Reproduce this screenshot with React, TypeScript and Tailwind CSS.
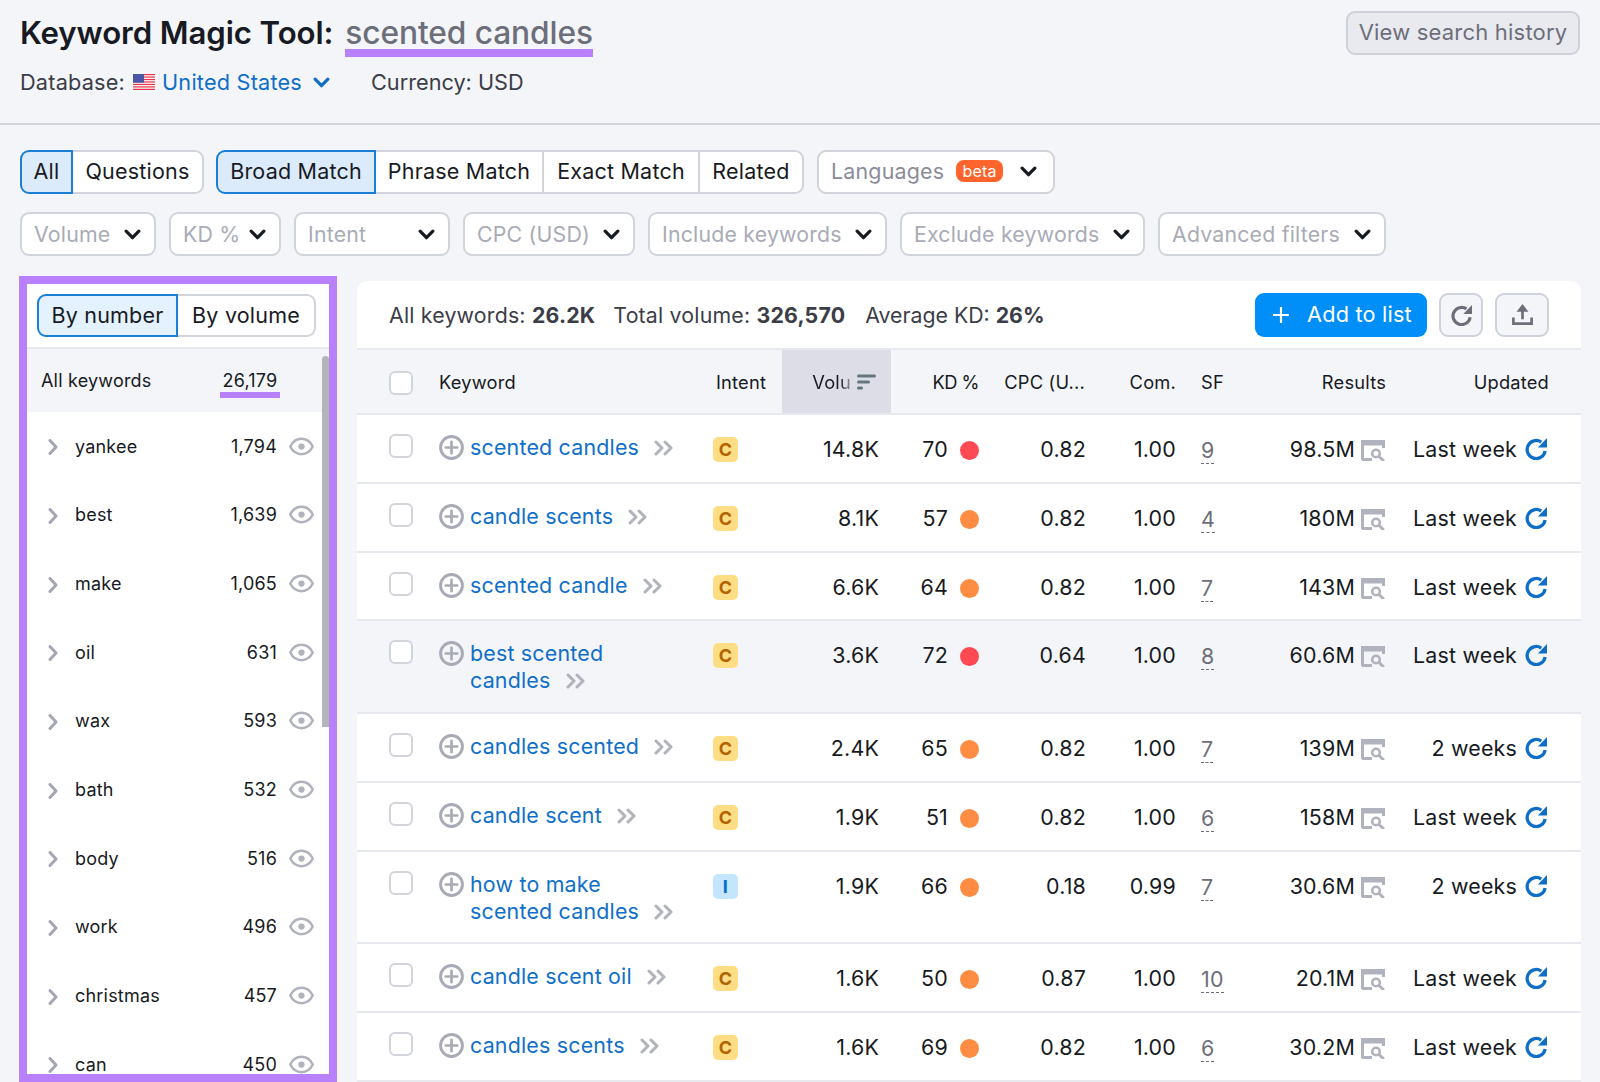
import React from "react";

const F = "font-['Inter',sans-serif]";

function Chevron({ className = "" }: { className?: string }) {
  return (
    <svg viewBox="0 0 16 10" className={className} fill="none" stroke="currentColor" strokeWidth="3" strokeLinecap="round" strokeLinejoin="round">
      <path d="M2 1.800 8 8 14 1.800" />
    </svg>
  );
}
function RightChevron() {
  return (
    <svg viewBox="0 0 10 16" className="w-[10px] h-4 text-[#a4a6b3]" fill="none" stroke="currentColor" strokeWidth="3" strokeLinecap="round" strokeLinejoin="round">
      <path d="M2 1.500 8 8l-6 6.500" />
    </svg>
  );
}
function Eye() {
  return (
    <svg viewBox="0 0 24 18" className="w-[25px] h-[19px] text-[#b0b2bc]" fill="none" stroke="currentColor" strokeWidth="2.400">
      <path d="M1.200 9C3.600 4.200 7.400 1.600 12 1.600S20.400 4.200 22.800 9c-2.400 4.800-6.200 7.400-10.800 7.400S3.600 13.800 1.200 9Z" />
      <circle cx="12" cy="9" r="3" fill="currentColor" stroke="none" />
    </svg>
  );
}
function PlusCircle() {
  return (
    <svg viewBox="0 0 24 24" className="w-[25px] h-[25px] shrink-0 mt-[1px] text-[#a8aab6]" fill="none" stroke="currentColor">
      <circle cx="12" cy="12" r="10.500" strokeWidth="2.800" />
      <path d="M12 6.500v11M6.500 12h11" strokeWidth="2.600" strokeLinecap="round" />
    </svg>
  );
}
function DoubleChevron() {
  return (
    <svg viewBox="0 0 20 16" className="inline-block w-5 h-4 ml-[15px] align-[-1px] text-[#b0b2bc]" fill="none" stroke="currentColor" strokeWidth="3" strokeLinecap="round" strokeLinejoin="round">
      <path d="M2 2l6 6-6 6M11 2l6 6-6 6" />
    </svg>
  );
}
function Refresh({ className = "" }: { className?: string }) {
  return (
    <svg viewBox="0 0 24 24" className={className} fill="none">
      <path d="M22 14.500A9.400 9.400 0 1 1 18 5.300" stroke="currentColor" strokeWidth="3.400" strokeLinecap="butt" />
      <path d="M24 1V11H14.500Z" fill="currentColor" />
    </svg>
  );
}
function Serp() {
  return (
    <svg viewBox="0 0 24 21" className="w-6 h-[21px] shrink-0 text-[#b0b2bd]" fill="none" stroke="currentColor">
      <path d="M1.500 20V2h21v6" strokeWidth="3" fill="none" />
      <path d="M0 0h24v5.500H0z" fill="currentColor" stroke="none" />
      <path d="M1 19.500h10" strokeWidth="3" />
      <circle cx="15" cy="13.500" r="3.800" strokeWidth="2.600" />
      <path d="M18 16.500l4 3.800" strokeWidth="3" strokeLinecap="round" />
    </svg>
  );
}
function Flag() {
  return (
    <svg viewBox="0 0 22 16" className="w-[22px] h-4 shrink-0">
      <rect width="22" height="16" fill="#fff" />
      {[0, 2.46, 4.92, 7.38, 9.84, 12.3, 14.76].map((y) => (
        <rect key={y} y={y} width="22" height="1.24" fill="#e8374a" />
      ))}
      <rect width="11" height="8.600" fill="#4a55a8" />
    </svg>
  );
}
function Upload() {
  return (
    <svg viewBox="0 0 24 24" className="w-[23px] h-[23px] text-[#6c6e79]" fill="none" stroke="currentColor" strokeWidth="2.800">
      <path d="M2.500 15v6.500h19V15" />
      <path d="M12 17V3" />
      <path d="M12 1 5.800 9h12.400Z" fill="currentColor" stroke="none" />
    </svg>
  );
}
function SortIcon() {
  return (
    <svg viewBox="0 0 19 16" className="w-[19px] h-4 text-[#66767f]" fill="currentColor">
      <rect width="19" height="3" y="0.500" rx="1.500" />
      <rect width="13" height="3" y="6.500" rx="1.500" />
      <rect width="6" height="3" y="12.500" rx="1.500" />
    </svg>
  );
}

function Dropdown({ label, w }: { label: string; w: string }) {
  return (
    <div className={`${w} h-[44px] flex items-center justify-between pl-[12px] pr-[13px] bg-white border-2 border-[#d1d4db] rounded-[9px] text-[21.3px] text-[#a9abb6]`}>
      <span className="whitespace-nowrap mt-[1px]">{label}</span>
      <Chevron className="w-[17px] h-[11px] text-[#171a22]" />
    </div>
  );
}

type Seg = { label: string; w: string; active?: boolean; first?: boolean; last?: boolean };
function Segment({ label, w, active, first, last }: Seg) {
  return (
    <div
      className={`${w} h-[44px] pb-[2px] flex items-center justify-center text-[21.5px] text-[#171a22] border-y-2 ${first ? "border-l-2 rounded-l-[9px]" : ""} ${last ? "border-r-2 rounded-r-[9px]" : ""} ${active ? "bg-[#dcebfb] border-[#1b7fd6] border-x-2" : !first && !last ? "bg-white border-[#d1d4db] border-r-2" : "bg-white border-[#d1d4db]"}`}
    >
      {label}
    </div>
  );
}

const side: [string, string][] = [
  ["yankee", "1,794"],
  ["best", "1,639"],
  ["make", "1,065"],
  ["oil", "631"],
  ["wax", "593"],
  ["bath", "532"],
  ["body", "516"],
  ["work", "496"],
  ["christmas", "457"],
  ["can", "450"],
];

type Row = {
  kw: string[];
  intent: "C" | "I";
  vol: string;
  kd: string;
  red?: boolean;
  cpc: string;
  com: string;
  sf: string;
  res: string;
  upd: string;
  tall?: boolean;
  hl?: boolean;
};
const rows: Row[] = [
  { kw: ["scented candles"], intent: "C", vol: "14.8K", kd: "70", red: true, cpc: "0.82", com: "1.00", sf: "9", res: "98.5M", upd: "Last week" },
  { kw: ["candle scents"], intent: "C", vol: "8.1K", kd: "57", cpc: "0.82", com: "1.00", sf: "4", res: "180M", upd: "Last week" },
  { kw: ["scented candle"], intent: "C", vol: "6.6K", kd: "64", cpc: "0.82", com: "1.00", sf: "7", res: "143M", upd: "Last week" },
  { kw: ["best scented", "candles"], intent: "C", vol: "3.6K", kd: "72", red: true, cpc: "0.64", com: "1.00", sf: "8", res: "60.6M", upd: "Last week", tall: true, hl: true },
  { kw: ["candles scented"], intent: "C", vol: "2.4K", kd: "65", cpc: "0.82", com: "1.00", sf: "7", res: "139M", upd: "2 weeks" },
  { kw: ["candle scent"], intent: "C", vol: "1.9K", kd: "51", cpc: "0.82", com: "1.00", sf: "6", res: "158M", upd: "Last week" },
  { kw: ["how to make", "scented candles"], intent: "I", vol: "1.9K", kd: "66", cpc: "0.18", com: "0.99", sf: "7", res: "30.6M", upd: "2 weeks", tall: true },
  { kw: ["candle scent oil"], intent: "C", vol: "1.6K", kd: "50", cpc: "0.87", com: "1.00", sf: "10", res: "20.1M", upd: "Last week" },
  { kw: ["candles scents"], intent: "C", vol: "1.6K", kd: "69", cpc: "0.82", com: "1.00", sf: "6", res: "30.2M", upd: "Last week" },
];

const cols = "grid grid-cols-[82px_274px_69px_109px_99px_96px_90px_95px_115px_163px_32px]";

export default function App() {
  return (
    <div className={`${F} w-[1600px] h-[1082px] overflow-hidden bg-[#f4f5f9] text-[#171a22] tracking-[0.2px]`}>
      <header className="h-[125px] border-b-2 border-[#d1d4db] pl-5 pr-5 flex justify-between">
        <div>
          <div className="flex items-start pt-[11px] h-[57px] leading-[44px] font-semibold tracking-[-0.1px]">
            <span className="text-[31.2px]">Keyword Magic Tool:</span>
            <span className="ml-[12px] h-[46px] border-b-[8px] border-[#b881fb] text-[#6c6e79] text-[31.7px] font-medium">scented candles</span>
          </div>
          <div className="flex items-center h-[36px] mt-[7px] text-[21.7px] text-[#3b3d47]">
            <span>Database:</span>
            <span className="ml-[8px]"><Flag /></span>
            <span className="ml-[7px] text-[#0f6fc8]">United States</span>
            <Chevron className="ml-[11px] w-[17px] h-[11px] text-[#0f6fc8]" />
            <span className="ml-[41px] tracking-normal">Currency: USD</span>
          </div>
        </div>
        <div className="mt-[11px] w-[234px] h-[44px] pb-[2px] flex items-center justify-center rounded-[9px] border-2 border-[#cfd1da] bg-[#e9eaf0] text-[22px] text-[#6c6e79]">
          View search history
        </div>
      </header>

      <div className="pl-5 mt-[25px] flex">
        <Segment label="All" w="w-[53px]" active first />
        <Segment label="Questions" w="w-[131px]" last />
        <div className="w-3" />
        <Segment label="Broad Match" w="w-[160px]" active first />
        <Segment label="Phrase Match" w="w-[168px]" />
        <Segment label="Exact Match" w="w-[156px]" />
        <Segment label="Related" w="w-[104px]" last />
        <div className="ml-[13px] w-[238px] h-[44px] pb-[2px] flex items-center pl-[12px] bg-white border-2 border-[#d1d4db] rounded-[9px] text-[21.4px] text-[#8a8c99]">
          <span>Languages</span>
          <span className="ml-[12px] w-[47px] h-[22px] rounded-[8px] bg-[#ff642d] text-white text-[16px] leading-[20px] flex items-center justify-center">beta</span>
          <Chevron className="ml-[17px] w-[17px] h-[11px] text-[#171a22]" />
        </div>
      </div>

      <div className="pl-5 mt-[18px] flex gap-[13px]">
        <Dropdown label="Volume" w="w-[136px]" />
        <Dropdown label="KD %" w="w-[112px]" />
        <Dropdown label="Intent" w="w-[156px]" />
        <Dropdown label="CPC (USD)" w="w-[172px]" />
        <Dropdown label="Include keywords" w="w-[239px]" />
        <Dropdown label="Exclude keywords" w="w-[245px]" />
        <Dropdown label="Advanced filters" w="w-[228px]" />
      </div>

      <div className="flex mt-[20px] pl-[19px] items-start">
        <aside className="w-[318px] h-[806px] shrink-0 border-[8px] border-[#b881fb] bg-white overflow-hidden relative">
          <div className="h-[65px] pl-[10px] pt-[10px] border-b-2 border-[#e8e9ef]">
            <div className="flex">
              <div className="w-[141px] h-[43px] flex items-center justify-center rounded-l-[9px] border-2 border-[#1b7fd6] bg-[#e3f2fe] text-[21.5px]">By number</div>
              <div className="w-[138px] h-[43px] flex items-center justify-center rounded-r-[9px] border-2 border-l-0 border-[#d1d4db] text-[21.5px]">By volume</div>
            </div>
          </div>
          <div className="h-[63px] bg-[#f4f5f9] flex items-start pl-[14px] text-[18px] leading-[26px]">
            <span className="w-[179px] mt-[19px]">All keywords</span>
            <span className="w-[60px] mt-[19px] text-center h-[30px] border-b-[6px] border-[#b881fb]">26,179</span>
          </div>
          {side.map(([name, n]) => (
            <div key={name} className="h-[68.67px] flex items-center text-[18px] pl-[21px] pt-[2px]">
              <RightChevron />
              <span className="ml-[17px] flex-1 -mt-[2px]">{name}</span>
              <span className="-mt-[2px]">{n}</span>
              <span className="ml-3 mr-[15px] -mt-[2px]"><Eye /></span>
            </div>
          ))}
          <div className="absolute right-0 top-[72px] w-[7px] h-[371px] bg-[#b4b5ba] rounded-t-[4px]" />
        </aside>

        <main className="ml-[20px] w-[1224px] mt-[5px] bg-white rounded-t-[10px] overflow-hidden text-[21.4px]">
          <div className="h-[69px] flex items-center pl-8 pr-8 border-b-2 border-[#e8e9ef]">
            <span className="text-[#3b3d47] text-[21.3px] mt-[2px]">All keywords: <b className="font-bold">26.2K</b></span>
            <span className="ml-[18px] text-[#3b3d47] text-[21.3px] mt-[2px]">Total volume: <b className="font-bold">326,570</b></span>
            <span className="ml-[20px] text-[#3b3d47] text-[21.3px] mt-[2px] tracking-normal">Average KD: <b className="font-bold">26%</b></span>
            <div className="ml-auto w-[172px] h-[44px] rounded-[9px] bg-[#008ff8] text-white text-[21.7px] flex items-center pl-[18px]">
              <svg viewBox="0 0 16 16" className="w-4 h-4" fill="none" stroke="currentColor" strokeWidth="2.200"><path d="M8 0v16M0 8h16" /></svg>
              <span className="ml-[18px]">Add to list</span>
            </div>
            <div className="ml-3 w-[44px] h-[44px] rounded-[9px] bg-[#f4f5f9] border-2 border-[#cfd1da] flex items-center justify-center">
              <Refresh className="w-[22px] h-[22px] text-[#6c6e79]" />
            </div>
            <div className="ml-3 w-[54px] h-[44px] rounded-[9px] bg-[#f4f5f9] border-2 border-[#cfd1da] flex items-center justify-center">
              <Upload />
            </div>
          </div>

          <div className={`${cols} h-[65px] bg-[#f4f5f9] border-b-2 border-[#e8e9ef] text-[18.3px] items-center`}>
            <div className="pl-8 mt-[3px]"><div className="w-6 h-6 rounded-[6px] border-2 border-[#d1d4db] bg-white" /></div>
            <div className="mt-[2px]">Keyword</div>
            <div className="pl-[3px] mt-[2px]">Intent</div>
            <div className="h-full bg-[#dcdde6] flex items-center justify-end pr-[15px]">
              <span className="mt-[2px] text-transparent bg-clip-text bg-gradient-to-r from-[#171a22] from-70% to-[#9a9ba6]">Volu</span>
              <span className="ml-[6px]"><SortIcon /></span>
            </div>
            <div className="text-right pr-[11px] mt-[2px] tracking-[-0.5px]">KD %</div>
            <div className="text-right pr-[1px] mt-[2px]">CPC (U...</div>
            <div className="text-right mt-[2px]">Com.</div>
            <div className="pl-[25px] mt-[2px]">SF</div>
            <div className="text-right mt-[2px]">Results</div>
            <div className="text-right mt-[2px]">Updated</div>
            <div />
          </div>

          {rows.map((r) => (
            <div key={r.kw.join(" ")} className={`${cols} ${r.tall ? "h-[92.7px]" : "h-[68.8px]"} ${r.hl ? "bg-[#f4f5f9]" : "bg-white"} border-b-2 border-[#e8e9ef] leading-[27px]`}>
              <div className="pl-8 pt-[19px]"><div className="w-6 h-6 rounded-[6px] border-2 border-[#d1d4db] bg-white" /></div>
              <div className="flex pt-[19px] text-[#0f6fc8] gap-[6px]">
                <PlusCircle />
                <div>
                  {r.kw.map((line, i) => (
                    <div key={line} className="whitespace-nowrap">
                      {line}
                      {i === r.kw.length - 1 && <DoubleChevron />}
                    </div>
                  ))}
                </div>
              </div>
              <div className="pt-[22px]">
                {r.intent === "C" ? (
                  <div className="w-[25px] h-[25px] rounded-[5px] bg-[#ffdd85] text-[#b26400] text-[18px] font-bold leading-[25px] text-center">C</div>
                ) : (
                  <div className="w-[25px] h-[25px] rounded-[5px] bg-[#c4e5fe] text-[#006dca] text-[18px] font-bold leading-[25px] text-center">I</div>
                )}
              </div>
              <div className="pt-[21px] text-right pr-[12px]">{r.vol}</div>
              <div className="pt-[21px] flex justify-end pr-[11px]">
                <span>{r.kd}</span>
                <span className={`ml-[12px] mt-[5px] w-[19px] h-[19px] rounded-full ${r.red ? "bg-[#ff4953]" : "bg-[#ff8c43]"}`} />
              </div>
              <div className="pt-[21px] text-right">{r.cpc}</div>
              <div className="pt-[21px] text-right">{r.com}</div>
              <div className="pt-[22px] pl-[25px]">
                <span className="inline-block text-[#6c6e79] border-b border-dashed border-[#6c6e79] leading-[26px]">{r.sf}</span>
              </div>
              <div className="pt-[21px] flex justify-end pr-[1px]">
                <span>{r.res}</span>
                <span className="ml-[6px] mt-[4px]"><Serp /></span>
              </div>
              <div className="pt-[21px] flex justify-end pr-[2px]">
                <span>{r.upd}</span>
                <Refresh className="ml-[7px] mt-[1px] w-[23px] h-[23px] text-[#0f6fc8]" />
              </div>
              <div />
            </div>
          ))}
        </main>
      </div>
    </div>
  );
}
